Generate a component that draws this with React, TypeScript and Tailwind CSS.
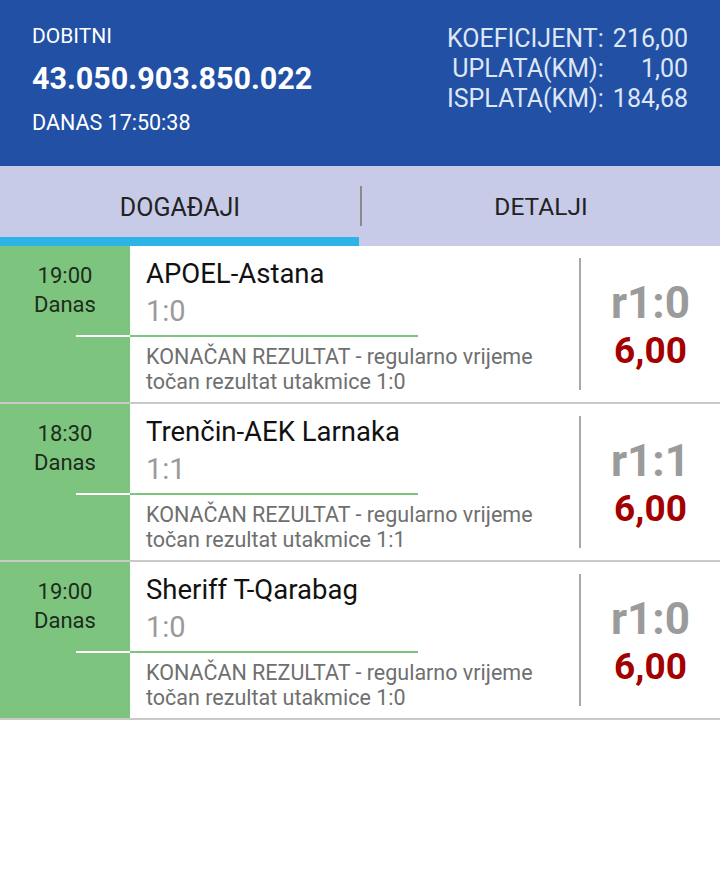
import React from "react";

const rows = [
  { time: "19:00", teams: "APOEL-Astana", score: "1:0", tip: "r1:0", odd: "6,00" },
  { time: "18:30", teams: "Trenčin-AEK Larnaka", score: "1:1", tip: "r1:1", odd: "6,00" },
  { time: "19:00", teams: "Sheriff T-Qarabag", score: "1:0", tip: "r1:0", odd: "6,00" },
];

export default function App() {
  return (
    <div className="w-[720px] h-[870px] bg-white" style={{ fontFamily: "Roboto, 'Noto Sans', sans-serif" }}>
      <div className="h-[166px] bg-[#2150a5] flex justify-between pl-[32px] pr-[32px]">
        <div className="pt-[23px] text-white">
          <div className="text-[21px] leading-[26px]">DOBITNI</div>
          <div className="text-[30.5px] font-bold leading-[40px] mt-[10px]">43.050.903.850.022</div>
          <div className="text-[21.5px] leading-[26px] mt-[11px]">DANAS 17:50:38</div>
        </div>
        <div className="pt-[24px] text-[#dfe6f6] text-[25px] leading-[30px] grid grid-cols-[auto_auto] gap-x-[9px] h-fit">
          <span className="text-right">KOEFICIJENT:</span><span className="text-right">216,00</span>
          <span className="text-right">UPLATA(KM):</span><span className="text-right">1,00</span>
          <span className="text-right">ISPLATA(KM):</span><span className="text-right">184,68</span>
        </div>
      </div>
      <div className="h-[80px] bg-[#c8cbe8] flex">
        <div className="w-[360px] flex flex-col">
          <div className="flex-1 flex items-center justify-center text-[25px] text-[#222] pt-[12px]">DOGAĐAJI</div>
          <div className="h-[9px] bg-[#2cb4e6] w-[359px]"></div>
        </div>
        <div className="w-[2px] h-[40px] bg-[#8a8a8a] mt-[20px]"></div>
        <div className="flex-1 flex items-center justify-center text-[24.5px] text-[#222] pt-[3px]">DETALJI</div>
      </div>
      {rows.map((r, i) => (
        <div key={i} className="flex h-[158px] border-b-2 border-[#c9c9c9]">
          <div className="w-[130px] bg-[#7dc57e] text-center text-[22px] leading-[29px] text-[#1d2b1d] pt-[15px]">
            <div>{r.time}</div>
            <div>Danas</div>
          </div>
          <div className="w-[449px] pl-[16px] pt-[10px]">
            <div className="text-[27.5px] leading-[35px] text-[#111]">{r.teams}</div>
            <div className="text-[29px] leading-[40px] text-[#9a9a9a]">{r.score}</div>
            <div className="relative mt-[4px] ml-[-16px] w-[288px] h-[2px] bg-[#7dc57e]">
              <div className="absolute left-[-54px] top-0 w-[54px] h-[2px] bg-white"></div>
            </div>
            <div className="mt-[7px] text-[21.5px] leading-[25px] text-[#6f6f6f]">
              <div>KONAČAN REZULTAT - regularno vrijeme</div>
              <div>točan rezultat utakmice {r.score}</div>
            </div>
          </div>
          <div className="w-[2px] bg-[#a8a8a8] my-[12px]"></div>
          <div className="flex-1 flex flex-col items-center pt-[31px]">
            <div className="text-[44px] leading-[52px] font-bold text-[#9b9b9b]">{r.tip}</div>
            <div className="text-[37px] leading-[43px] font-bold text-[#a30000]">{r.odd}</div>
          </div>
        </div>
      ))}
    </div>
  );
}
